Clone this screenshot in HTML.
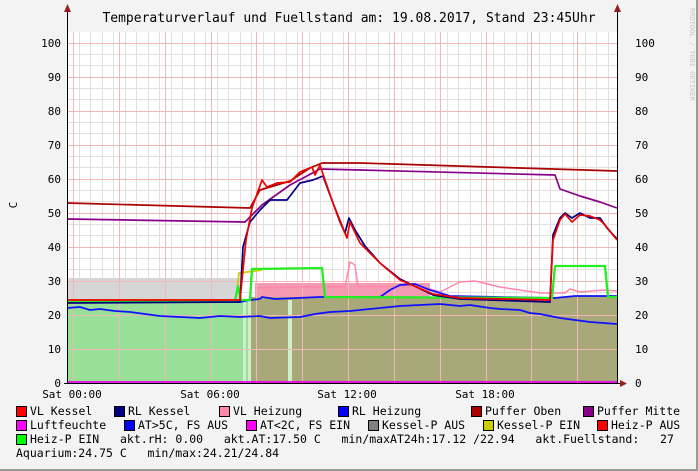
<!DOCTYPE html>
<html><head><meta charset="utf-8"><style>
html,body{margin:0;padding:0;}
body{width:698px;height:471px;background:#f3f3f3;position:relative;overflow:hidden;font-family:"DejaVu Sans Mono","Liberation Mono",monospace;}
.t{position:absolute;font-size:11.5px;white-space:pre;color:#000;line-height:14px;}
.sq{position:absolute;width:9px;height:9px;border:1px solid #000;}
</style></head><body>
<div style="position:absolute;left:0;top:0;width:696px;height:469px;border-right:2px solid #9a9a9a;border-bottom:2px solid #9a9a9a;"></div>
<svg width="698" height="471" style="position:absolute;left:0;top:0" xmlns="http://www.w3.org/2000/svg">
<rect x="67" y="32" width="550" height="351" fill="#fff"/>
<g stroke="#e4dede" stroke-width="1">
<path d="M79.5 32V383M90.5 32V383M102.5 32V383M113.5 32V383M125.5 32V383M136.5 32V383M148.5 32V383M159.5 32V383M171.5 32V383M182.5 32V383M194.5 32V383M205.5 32V383M217.5 32V383M228.5 32V383M240.5 32V383M251.5 32V383M263.5 32V383M274.5 32V383M286.5 32V383M297.5 32V383M309.5 32V383M320.5 32V383M332.5 32V383M343.5 32V383M355.5 32V383M366.5 32V383M378.5 32V383M389.5 32V383M401.5 32V383M412.5 32V383M424.5 32V383M435.5 32V383M447.5 32V383M458.5 32V383M470.5 32V383M481.5 32V383M493.5 32V383M504.5 32V383M516.5 32V383M527.5 32V383M539.5 32V383M550.5 32V383M562.5 32V383M573.5 32V383M585.5 32V383M596.5 32V383M608.5 32V383"/>
<path d="M67 371.5H617M67 360.5H617M67 337.5H617M67 326.5H617M67 303.5H617M67 292.5H617M67 269.5H617M67 258.5H617M67 235.5H617M67 224.5H617M67 201.5H617M67 190.5H617M67 167.5H617M67 156.5H617M67 133.5H617M67 122.5H617M67 99.5H617M67 88.5H617M67 65.5H617M67 54.5H617"/>
</g>
<polygon points="67,278 240,278 240,383 67,383" fill="#d6d6d6"/>
<polygon points="67,300 255,300 255,383 67,383" fill="#98e098"/>
<polygon points="255,283 430,283 430,300 255,300" fill="#f49ab0"/>
<polygon points="251,297 400,297 470,298 550,297 617,296 617,383 251,383" fill="#a9a879"/>
<rect x="243" y="300" width="3" height="83" fill="#cfeec9"/>
<rect x="248" y="300" width="3" height="83" fill="#cfeec9"/>
<rect x="288" y="300" width="4" height="83" fill="#cfeec9"/>
<g stroke="#f0b8b8" stroke-width="1">
<path d="M73.5 32V383M119.5 32V383M165.5 32V383M211.5 32V383M256.5 32V383M302.5 32V383M348.5 32V383M394.5 32V383M440.5 32V383M486.5 32V383M531.5 32V383M577.5 32V383"/>
<path d="M67 349.5H617M67 315.5H617M67 281.5H617M67 247.5H617M67 213.5H617M67 179.5H617M67 145.5H617M67 111.5H617M67 77.5H617M67 43.5H617"/>
</g>
<g fill="none" stroke-width="1.7" stroke-linejoin="round">
<polyline stroke="#ff88aa" stroke-width="1.5" points="255,288 300,287 345,287 350,262 355,265 358,287 420,286 440,292 460,282 475,281 500,287 540,293 565,293 570,289 580,292 604,290 617,291"/>
<polyline stroke="#1010ff" points="67,308 80,307 90,310 100,309 115,311 130,312 145,314 160,316 180,317 200,318 220,316 240,317 260,316 270,318 300,317 315,314 330,312 350,311 370,309 390,307 400,306 420,305 440,304 460,306 470,305 490,308 500,309 520,310 530,313 540,314 550,316 560,318 575,320 590,322 617,324"/>
<polyline stroke="#1010ff" points="67,301 240,302 250,300 260,299 262,297 275,299 320,297 380,297 390,290 400,285 415,284 430,290 450,296 500,297 555,298 575,296 617,296"/>
<polyline stroke="#cccc00" points="67,300 236,300 239,273 255,271 262,270"/>
<polyline stroke="#22ee22" stroke-width="2.3" points="67,301 235,301 238,286 241,300 250,300 252,269 322,268 325,297 552,298 555,266 605,266 608,297 617,297"/>
<polyline stroke="#aa0000" points="67,203 250,208 260,190 290,181 310,168 322,163 360,163 617,171"/>
<polyline stroke="#880088" points="67,219 245,222 262,205 290,185 320,169 360,170 555,175 560,189 580,196 600,202 617,208"/>
<polyline stroke="#000080" points="67,303 240,302 243,247 250,222 260,210 270,200 287,200 300,183 313,180 323,176 327,187 333,203 340,222 345,233 349,218 355,230 365,246 380,263 400,279 433,295 460,299 550,302 553,235 560,218 565,213 572,218 580,213 590,218 600,218 607,228 617,239"/>
<polyline stroke="#ee0000" points="67,300 240,300 246,240 252,208 262,180 267,187 277,183 290,182 300,172 312,167 315,175 320,165 325,180 333,203 347,238 350,222 360,243 380,263 400,280 433,294 460,298 550,300 553,240 560,220 565,214 572,222 580,215 590,216 600,220 605,225 617,240"/>
<polyline stroke="#ee00ee" points="67,382 617,382"/>
</g>
<path d="M67.5 12V383M617.5 12V383M67 383.5H622M64 383.5H67" stroke="#000" stroke-width="1"/>
<polygon points="64,12 71,12 67.5,4" fill="#9b1c1c"/>
<polygon points="614,12 621,12 617.5,4" fill="#9b1c1c"/>
<polygon points="620,380 620,387 627,383.5" fill="#9b1c1c"/>
<text x="349" y="22" font-family="DejaVu Sans Mono,Liberation Mono,monospace" font-size="13" text-anchor="middle" fill="#000">Temperaturverlauf und Fuellstand am: 19.08.2017, Stand 23:45Uhr</text>
<text x="17" y="205" font-family="DejaVu Sans Mono,monospace" font-size="11" transform="rotate(-90 17 205)" text-anchor="middle">C</text>
<text x="690" y="8" font-family="DejaVu Sans Mono,monospace" font-size="7" fill="#c8c8c8" transform="rotate(90 690 8)">RRDTOOL / TOBI OETIKER</text>
<g font-family="DejaVu Sans Mono,monospace" font-size="11" fill="#000">
<g text-anchor="end">
<text x="61" y="47">100</text><text x="61" y="81">90</text><text x="61" y="115">80</text><text x="61" y="149">70</text><text x="61" y="183">60</text><text x="61" y="217">50</text><text x="61" y="251">40</text><text x="61" y="285">30</text><text x="61" y="319">20</text><text x="61" y="353">10</text><text x="61" y="387">0</text>
</g>
<text x="635" y="47">100</text><text x="635" y="81">90</text><text x="635" y="115">80</text><text x="635" y="149">70</text><text x="635" y="183">60</text><text x="635" y="217">50</text><text x="635" y="251">40</text><text x="635" y="285">30</text><text x="635" y="319">20</text><text x="635" y="353">10</text><text x="635" y="387">0</text>
<g text-anchor="middle"><text x="72" y="398">Sat 00:00</text><text x="210" y="398">Sat 06:00</text><text x="347" y="398">Sat 12:00</text><text x="485" y="398">Sat 18:00</text></g>
</g>
</svg>
<div class="sq" style="left:16px;top:406px;background:#ff0000"></div><div class="t" style="left:30px;top:404px">VL Kessel</div>
<div class="sq" style="left:114px;top:406px;background:#000080"></div><div class="t" style="left:128px;top:404px">RL Kessel</div>
<div class="sq" style="left:219px;top:406px;background:#ff88aa"></div><div class="t" style="left:233px;top:404px">VL Heizung</div>
<div class="sq" style="left:338px;top:406px;background:#0000ff"></div><div class="t" style="left:352px;top:404px">RL Heizung</div>
<div class="sq" style="left:471px;top:406px;background:#aa0000"></div><div class="t" style="left:485px;top:404px">Puffer Oben</div>
<div class="sq" style="left:583px;top:406px;background:#880088"></div><div class="t" style="left:597px;top:404px">Puffer Mitte</div>
<div class="sq" style="left:16px;top:420px;background:#ff00ff"></div><div class="t" style="left:30px;top:418px">Luftfeuchte</div>
<div class="sq" style="left:124px;top:420px;background:#0000ff"></div><div class="t" style="left:138px;top:418px">AT&gt;5C, FS AUS</div>
<div class="sq" style="left:246px;top:420px;background:#ff00ff"></div><div class="t" style="left:260px;top:418px">AT&lt;2C, FS EIN</div>
<div class="sq" style="left:368px;top:420px;background:#808080"></div><div class="t" style="left:382px;top:418px">Kessel-P AUS</div>
<div class="sq" style="left:483px;top:420px;background:#cccc00"></div><div class="t" style="left:497px;top:418px">Kessel-P EIN</div>
<div class="sq" style="left:597px;top:420px;background:#ff0000"></div><div class="t" style="left:611px;top:418px">Heiz-P AUS</div>
<div class="sq" style="left:16px;top:434px;background:#00ff00"></div><div class="t" style="left:30px;top:432px">Heiz-P EIN   akt.rH: 0.00   akt.AT:17.50 C   min/maxAT24h:17.12 /22.94   akt.Fuellstand:   27</div>
<div class="t" style="left:16px;top:446px">Aquarium:24.75 C   min/max:24.21/24.84</div>
</body></html>
